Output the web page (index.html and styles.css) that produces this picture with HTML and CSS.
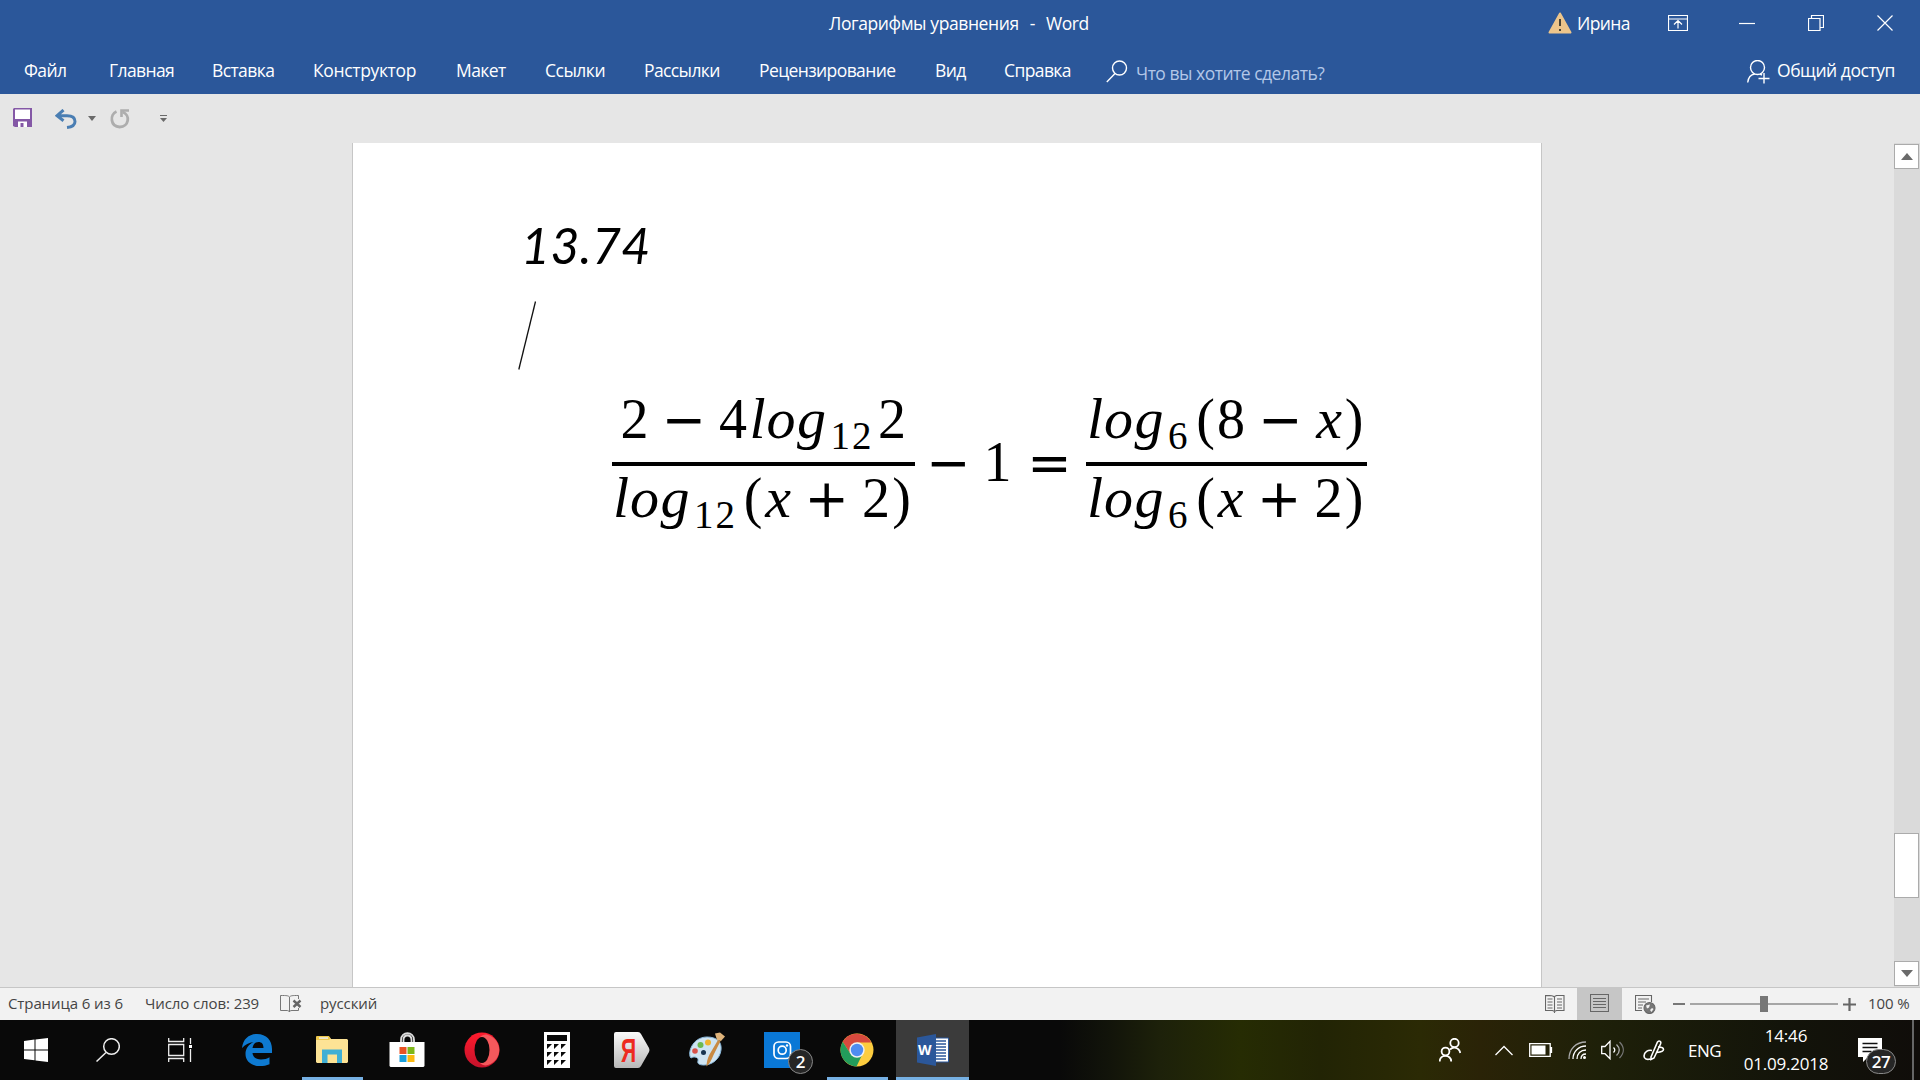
FILE: index.html
```html
<!DOCTYPE html>
<html lang="ru">
<head>
    <meta charset="UTF-8">
    <title>Логарифмы уравнения - Word</title>
    <link rel="stylesheet" href="styles.css">
</head>
<body>
    <header class="header">
        <div class="title-bar">
            <div class="title"><span>Логарифмы уравнения</span><span>-</span><span>Word</span></div>
            <div class="window-tools">
                <svg class="warn" width="24" height="22" viewBox="0 0 24 22"><path d="M12 1.5 22.5 20.5h-21z" fill="#edc58b" stroke="#edc58b" stroke-width="2" stroke-linejoin="round"/><path d="M12 7v7M12 17v2" stroke="#4a4436" stroke-width="2"/></svg>
                <span class="user">Ирина</span>
                <svg class="win-btn ribbon" width="20" height="16" viewBox="0 0 20 16"><path d="M.5.5h19v15H.5zM.5 4h19M10 13.500V6M6 9.500l4-4 4 4"/></svg>
                <svg class="win-btn" width="16" height="16" viewBox="0 0 16 16"><path d="M0 8.500h16"/></svg>
                <svg class="win-btn" width="16" height="16" viewBox="0 0 16 16"><path d="M.5 3.500h11.500v12H.5zM3.500 3.500V.5h12v12H12"/></svg>
                <svg class="win-btn" width="16" height="16" viewBox="0 0 16 16"><path d="M.5.5l15 15M15.500.5l-15 15"/></svg>
            </div>
        </div>
        <nav class="menu">
            <span class="file">Файл</span>
            <span class="home">Главная</span>
            <span class="insert">Вставка</span>
            <span class="design">Конструктор</span>
            <span class="layout">Макет</span>
            <span class="refs">Ссылки</span>
            <span class="mail">Рассылки</span>
            <span class="review">Рецензирование</span>
            <span class="view">Вид</span>
            <span class="help">Справка</span>
            <svg class="find" width="22" height="23" viewBox="0 0 22 23"><circle cx="13.500" cy="8" r="7"/><path d="M9 13.500.8 22"/></svg>
            <span class="ask">Что вы хотите сделать?</span>
            <div class="share">
                <svg width="23" height="24" viewBox="0 0 23 24"><circle cx="10.500" cy="7.500" r="7"/><path d="M.7 22.500c.6-5 3.300-8 7-8.500M13 14l2 1M17 13v10.500M11.500 18.500H22.500"/></svg>
                <span>Общий доступ</span>
            </div>
        </nav>
    </header>

    <div class="quick-bar">
        <svg class="save" width="20" height="20" viewBox="0 0 20 20"><path d="M1 0h18v19H2l-2-1V1z" fill="#8458a6"/><path d="M2 1.500h15v9.500H2z" fill="#fff"/><path d="M5 13.500h9V19H5z" fill="#fff"/><path d="M7.500 15h3v4h-3z" fill="#8458a6"/></svg>
        <svg class="undo" width="22" height="20" viewBox="0 0 22 20"><path d="M8.500 1 2 6.700l6.500 5M2.500 6.700H12c5.500 0 8 2.600 8 5.800 0 3.500-3 5.500-8 6" fill="none" stroke="#4a7eb3" stroke-width="3"/></svg>
        <svg class="drop" width="9" height="5" viewBox="0 0 9 5"><path d="M0 0h8L4 5z" fill="#6a6a6a"/></svg>
        <svg class="redo" width="20" height="20" viewBox="0 0 20 20"><path d="M6.500 2.500C-.5 5.500.2 17.800 9.700 18c9.300-.2 11-12 3-15" fill="none" stroke="#adadad" stroke-width="2.800"/><path d="M11.500 8V1.500H19" fill="none" stroke="#adadad" stroke-width="2.600"/></svg>
        <svg class="more" width="8" height="8" viewBox="0 0 8 8"><path d="M0 .5h7" stroke="#6a6a6a"/><path d="M0 3h7L3.500 7z" fill="#6a6a6a"/></svg>
    </div>

    <main class="workspace">
        <div class="page">
            <h1>13.74</h1>
            <svg class="stroke" width="20" height="70" viewBox="0 0 20 70"><path d="M17.500.5.800 68.500" fill="none" stroke="#111" stroke-width="1.300"/></svg>
            <div class="equation">
                <div class="fraction">
                    <div class="row"><b>2</b><s>−</s><b>4</b><i class="l">l</i><i class="o">o</i><i class="g">g</i><sub>12</sub><b>2</b></div>
                    <div class="row wide"><i class="l">l</i><i class="o">o</i><i class="g">g</i><sub>12</sub><u class="open">(</u><i class="x">x</i><s>+</s><b>2</b><u>)</u></div>
                </div>
                <div class="row middle"><s>−</s><b>1</b><s class="equals">=</s></div>
                <div class="fraction">
                    <div class="row wide"><i class="l">l</i><i class="o">o</i><i class="g">g</i><sub>6</sub><u class="open">(</u><b>8</b><s>−</s><i class="x">x</i><u>)</u></div>
                    <div class="row wide"><i class="l">l</i><i class="o">o</i><i class="g">g</i><sub>6</sub><u class="open">(</u><i class="x">x</i><s>+</s><b>2</b><u>)</u></div>
                </div>
            </div>
        </div>
        <div class="scrollbar">
            <div class="scroll-btn"><svg width="12" height="7" viewBox="0 0 12 7"><path d="M0 7h12L6 0z"/></svg></div>
            <div class="thumb"></div>
            <div class="scroll-btn"><svg width="12" height="7" viewBox="0 0 12 7"><path d="M0 0h12L6 7z"/></svg></div>
        </div>
    </main>

    <footer class="status">
        <span class="pages">Страница 6 из 6</span>
        <span class="words">Число слов: 239</span>
        <svg class="proof" width="22" height="18" viewBox="0 0 22 18"><path d="M9.500 17V2C8 .5 7 .5.500.5v15h6.500c1 0 2 .5 2.500 1.500 0-1 1-1.500 2.500-1.500h6.500V13M9.500 2C11 .5 12 .5 18.500.5V4" fill="none" stroke="#777"/><path d="M13.500 5.500l7 6.500M20.500 5.500l-7 6.500" stroke="#666" stroke-width="2.400"/></svg>
        <span class="words">русский</span>
        <div class="status-right">
            <svg class="read" width="20" height="18" viewBox="0 0 20 18"><path d="M9.500 18V2C8 .5 7 .5.500.5v15h7l2 1 2-1h7.500V.5h-7.500l-2 1M2.500 4h5M2.500 7h5M2.500 10h5M2.500 13h5M12 4h5M12 7h5M12 10h5M12 13h5"/></svg>
            <div class="print"><svg width="19" height="18" viewBox="0 0 19 18"><path d="M.5.5h18v17H.5zM3 4.500h13M3 7.500h13M3 10.500h13M3 13.500h13"/></svg></div>
            <svg class="web" width="21" height="19" viewBox="0 0 21 19"><path d="M7 15.500H.5V.5h16V7M3 4h11M3 7h8M3 10h5M3 13h4"/><circle cx="14.500" cy="13" r="5.500" fill="#777"/><path d="M11 10.500l4-1-1 3-2 1zM15 15l2-2 1.500 1-2 3z" fill="#f2f2f2" stroke="none"/></svg>
            <span class="minus"></span>
            <div class="zoom"><span></span></div>
            <svg class="plus" width="13" height="13" viewBox="0 0 13 13"><path d="M0 6.500h13M6.500 0v13"/></svg>
            <span class="percent">100 %</span>
        </div>
    </footer>

    <div class="taskbar">
        <div class="task"><svg width="24" height="24" viewBox="0 0 24 24"><path d="M0 3l10.500-1.400v9.900H0zM11.500 1.400 24 0v11.500H11.500zM0 12.500h10.500v9.800L0 21zM11.500 12.500H24V24l-12.500-1.600z" fill="#fff"/></svg></div>
        <div class="task"><svg width="24" height="24" viewBox="0 0 24 24" fill="none" stroke="#eee" stroke-width="1.500"><circle cx="15.500" cy="8.500" r="7.800"/><path d="M10 14.500.5 23.500"/></svg></div>
        <div class="task"><svg width="24" height="24" viewBox="0 0 24 24" fill="none" stroke="#eee" stroke-width="1.300"><path d="M.7 6.500h15v11H.7zM.7 0v3.500h15V0M.7 24v-3.500h15V24M22.500 0v6M22.500 11v13"/><path d="M21 7h3v3h-3z" fill="#fff" stroke="none"/></svg></div>
        <div class="task edge"><svg width="32" height="34" viewBox="0 0 32 34"><path d="M1 15C2 6 8 1 16 1c9.500 0 15 6.500 15 15v4H11.500c.4 4.500 4 6.500 8.500 6.500 3.500 0 6-1 8.500-2.300v7C25.500 32.500 22.500 33 19 33 9.500 33 4.500 27.500 4.500 21c0-5.500 3-9.500 8-12C8 9.500 4 11.500 1 15zm10.500 0h11c0-4-1.800-6-5-6s-5.200 2-6 6z" fill="#0e7ad1"/></svg></div>
        <div class="task open-app"><svg width="32" height="28" viewBox="0 0 32 28"><path d="M0 1.500h14l1 1.500h16l1 1v22l-1 1H1l-1-1z" fill="#fde395"/><path d="M0 1q0-1 1-1h12l1.500 2.500L13 4H0z" fill="#efc94c"/><path d="M3 1.300h9v1.500H3z" fill="#eee"/><path d="M6 13.500h20V27h-5v-8.500h-9.500V27H6z" fill="#40afd5"/></svg></div>
        <div class="task"><svg width="36" height="36" viewBox="0 0 36 36"><path d="M12 10V8c0-9 13-9 13 0v2M14.500 10V8c0-6 8-6 8 0v2" fill="none" stroke="#ddd" stroke-width="1.800"/><path d="M.5 10h35v24l-1 1h-33l-1-1z" fill="#fff"/><path d="M10.500 15h7v7h-7z" fill="#e95325"/><path d="M18.500 15h7v7h-7z" fill="#7eb71a"/><path d="M10.500 23h7v7h-7z" fill="#1a9fdb"/><path d="M18.500 23h7v7h-7z" fill="#fbb912"/></svg></div>
        <div class="task"><svg width="36" height="36" viewBox="0 0 36 36"><defs><linearGradient id="opera" x2="0" y2="1"><stop stop-color="#ff1b2d"/><stop offset="1" stop-color="#c4122b"/></linearGradient></defs><circle cx="18" cy="18" r="17.500" fill="url(#opera)"/><path d="M24 3c15 5 15 25 0 30-3 1-6 0-8-2 12 0 12-26 0-26 2-2 5-3 8-2z" fill="#f4585c"/><ellipse cx="18" cy="18" rx="7.500" ry="13" fill="#090909"/></svg></div>
        <div class="task"><svg width="26" height="36" viewBox="0 0 26 36"><path d="M0 0h26v36H0z" fill="#fff"/><path d="M3 3h20v6H3zM3 12h5L3 17zM10 12h5L10 17zM17 12h5L17 17zM3 20h5L3 25zM10 20h5L10 25zM17 20h5L17 25zM3 28h5L3 33zM10 28h5L10 33zM17 28h5L17 33z" fill="#0a0a0a"/></svg></div>
        <div class="task yandex"><svg width="36" height="36" viewBox="0 0 36 36"><defs><linearGradient id="tag" x2="0" y2="1"><stop stop-color="#fafafa"/><stop offset="1" stop-color="#b8b8b8"/></linearGradient></defs><path d="M2 0h22q2 0 3 2l8 14q1 2 0 4l-8 14q-1 2-3 2H2q-2 0-2-2V2Q0 0 2 0z" fill="url(#tag)"/></svg><span>Я</span></div>
        <div class="task"><svg width="36" height="36" viewBox="0 0 36 36"><path d="M18 5c10 0 15 5 14 13-1 9-9 15-17 15-4 0-7-1-6-4 1-4-4-5-7-3C-2 22 3 5 18 5z" fill="#cfe4f2" stroke="#89b8db"/><circle cx="6" cy="19" r="2.800" fill="#d8524a"/><circle cx="11.500" cy="13" r="3" fill="#6dba50"/><circle cx="19" cy="10.500" r="3" fill="#f0b32e"/><circle cx="14.500" cy="20.500" r="2.500" fill="#173451"/><path d="M17.500 34.500c0-4 1-8 3-12L29 8l2.500 1-7 14c-2 5-4 9-7 11.500z" fill="#c88a43"/><path d="M26 1.500l5-1 5 4-4 4.500-4-1z" fill="#dfb37a"/></svg></div>
        <div class="task insta"><svg width="36" height="36" viewBox="0 0 36 36"><path d="M0 0h36v36H0z" fill="#0a78d6"/><g fill="none" stroke="#fff" stroke-width="1.700"><rect x="10" y="10" width="16.500" height="16.500" rx="4.500"/><circle cx="18.200" cy="18.200" r="4"/></g><circle cx="23" cy="13.500" r="1.200" fill="#fff"/></svg><span class="badge">2</span></div>
        <div class="task open-app chrome"><svg width="34" height="34" viewBox="0 0 34 34"><circle cx="17" cy="17" r="16.500" fill="#fdcd3f"/><path d="M17 17 2.700 8.700A16.500 16.500 0 0 1 31.300 9.500H17z" fill="#d74a3e"/><path d="M2.700 8.700 10 20l7-11z" fill="#d74a3e"/><path d="M2.700 8.700A16.500 16.500 0 0 0 16.500 33.500L22 22 10 20z" fill="#239c5b"/><circle cx="17" cy="17" r="7.700" fill="#f0f0f0"/><circle cx="17" cy="17" r="6.200" fill="#4e8cf0"/></svg></div>
        <div class="task word"><svg width="32" height="32" viewBox="0 0 32 32"><path d="M17 4h14.500v24H17z" fill="#fff" stroke="#2b579a"/><path d="M19 7h10M19 10h10M19 13h10M19 16h10M19 19h10M19 22h10M19 25h10" stroke="#2b579a" stroke-width="1.400"/><path d="M0 3.500 19 0v32L0 28.500z" fill="#2b579a"/></svg><span>W</span></div>

        <div class="tray">
            <svg class="people" width="22" height="24" viewBox="0 0 22 24" stroke-width="1.800"><circle cx="15.500" cy="5" r="4.200"/><circle cx="6.500" cy="13.500" r="3.900"/><path d="M.7 23.500c0-7.500 11.500-7.500 11.500 0M11 11.500c3-3 9-2.500 10.300 3.500"/></svg>
            <svg class="chevron" width="18" height="11" viewBox="0 0 18 11"><path d="M.5 10 9 1.500l8.500 8.500"/></svg>
            <svg class="battery" width="24" height="14" viewBox="0 0 24 14"><path d="M.7.7h20.500v12.600H.7zM22.500 4v6"/><path d="M2.500 2.500h14v9h-14z" fill="#fff" stroke="none"/></svg>
            <svg class="wifi" width="19" height="19" viewBox="0 0 19 19"><path d="M1 18C1 8 8 1 18 1" stroke="#aaa"/><path d="M5 18C5 10.500 10.500 5 18 5M9 18c0-5.500 3.500-9 9-9M13 18c0-3 2-5 5-5"/><circle cx="16.500" cy="16.500" r="1.500" fill="#fff" stroke="none"/></svg>
            <svg class="volume" width="23" height="20" viewBox="0 0 23 20"><path d="M.7 6.500H4L9 1.300v17.400l-5-5H.7zM12.500 7.500c1.500 1.500 1.500 3.500 0 5"/><path d="M15.500 4.500c3.500 3.500 3.500 7.500 0 11" stroke="#aaa"/><path d="M18.500 2c5 5 5 11 0 16" stroke="#777"/></svg>
            <svg class="pen" width="22" height="21" viewBox="0 0 22 21" stroke-width="1.600"><path d="M8 17 14.500 2c2-2 4-.5 3 2L11 18l-3 1.500zM9 10.500c-4-1-7.800 1.500-8 5.500 0 3 3.200 4 6.200 3M15 7c4 0 5.500 1 5.500 2.500S18 12 14 12.500"/></svg>
            <span class="lang">ENG</span>
            <div class="clock"><span class="time">14:46</span><span class="date">01.09.2018</span></div>
            <div class="notes"><svg width="24" height="24" viewBox="0 0 24 24"><path d="M0 0h24v19H10l-5 5v-5H0z" fill="#fff"/><path d="M4.500 5.500h15M4.500 9.500h15M4.500 13.500h9" stroke="#111" stroke-width="1.300"/></svg><span class="badge">27</span></div>
        </div>
    </div>
</body>
</html>
```
FILE: styles.css
```css
* {
    margin: 0;
    padding: 0;
    box-sizing: border-box;
}

body {
    width: 1920px;
    height: 1080px;
    overflow: hidden;
    display: flex;
    flex-direction: column;
    background: #e6e6e6;
    font-family: "Open Sans", "Noto Sans", sans-serif;
}

svg {
    display: block;
    flex: none;
}

span {
    white-space: nowrap;
}

/* Header */
.header {
    height: 94px;
    background: #2b579a;
    color: #fff;
    font-size: 17.5px;
    letter-spacing: -0.6px;
}

.title-bar {
    height: 47px;
    display: flex;
    line-height: 47px;
}

.title {
    display: flex;
    gap: 11px;
    padding-left: 829px;
    width: 1548px;
    flex: none;
    letter-spacing: -0.4px;
}

.window-tools {
    display: flex;
    align-items: center;
    flex: none;
}

.warn {
    margin-top: -1px;
}

.user {
    width: 91px;
    margin-left: 5px;
}

.win-btn {
    fill: none;
    stroke: #fff;
    stroke-width: 1.200;
    margin: -1px 53px 0 0;
}

.ribbon {
    margin-right: 51px;
}

.menu {
    height: 47px;
    display: flex;
    line-height: 47px;
    padding-left: 24px;
}

.menu > * {
    flex: none;
}

.file { width: 85px; }
.home { width: 103px; }
.insert { width: 101px; }
.design { width: 143px; letter-spacing: -0.35px; }
.layout { width: 89px; }
.refs { width: 89px; letter-spacing: -0.5px; }
.refs { width: 99px; }
.mail { width: 115px; }
.review { width: 176px; }
.view { width: 69px; }
.help { width: 102px; }

.find,
.share svg {
    fill: none;
    stroke: #fff;
    stroke-width: 1.400;
}

.find {
    margin-top: 13px;
}

.ask {
    color: #b3c7e8;
    width: 619px;
    padding: 3px 0 0 8px;
    letter-spacing: -0.5px;
}

.share {
    display: flex;
    gap: 7px;
    letter-spacing: -0.45px;
}

.share svg {
    margin-top: 13px;
}

/* Quick access */
.quick-bar {
    height: 49px;
    display: flex;
    padding: 14px 0 0 13px;
}

.undo { margin: 1px 11px 0 22px; }
.drop { margin-top: 8px; }
.redo { margin: 1px 30px 0 13px; }
.more { margin-top: 7px; }

/* Document */
.workspace {
    height: 844px;
    display: flex;
    justify-content: space-between;
    padding-left: 352px;
}

.page {
    width: 1190px;
    position: relative;
    padding: 72px 0 0 168px;
    background: #fff;
    border: 1px solid #c6c6c6;
    border-width: 0 1px;
    color: #000;
}

.page h1 {
    font: italic 400 50px/60px Lato, sans-serif;
    letter-spacing: 0.4px;
    height: 163px;
}

.stroke {
    position: absolute;
    left: 165px;
    top: 158px;
}

.equation {
    display: flex;
    margin-left: 91px;
    height: 170px;
    font-family: "Liberation Serif", serif;
    font-size: 56px;
}

.row {
    display: flex;
    justify-content: center;
    align-items: baseline;
    line-height: 82px;
}

.fraction .row:first-child {
    height: 88px;
    border-bottom: 4px solid #000;
}

.fraction .row:last-child {
    height: 79px;
    line-height: 64px;
}

.row > * {
    text-align: center;
    text-decoration: none;
    flex: none;
}

.row b {
    width: 31px;
    font-weight: 400;
}

.row i { font-size: 58px; }
.row .l { width: 18px; }
.row .o { width: 28px; }
.row .g { width: 34px; }
.row .x { width: 30px; }

.row s {
    width: 67.5px;
    font-family: "DejaVu Sans", sans-serif;
    font-size: 53px;
}

.row .equals {
    width: 73px;
}

.row u {
    width: 20px;
}

.row .open {
    width: 23px;
    padding-left: 3px;
}

.row sub {
    font-size: 39px;
    letter-spacing: 2px;
    margin: 0 3px 0 2px;
    position: relative;
    top: 11px;
    vertical-align: baseline;
}

.wide {
    padding-right: 3px;
}

.middle {
    height: 168px;
    line-height: 168px;
}

.scrollbar {
    width: 26px;
    padding: 1px 1px 1px 0;
    background: #dadada;
    display: flex;
    flex-direction: column;
}

.scroll-btn,
.thumb {
    height: 25px;
    background: #fff;
    border: 1px solid #ababab;
    display: flex;
    align-items: center;
    justify-content: center;
    fill: #6a6a6a;
}

.thumb {
    height: 65px;
    margin: 664px 0 63px;
}

/* Status bar */
.status {
    height: 33px;
    border-top: 1px solid #c6c6c6;
    background: #f2f2f2;
    color: #444;
    font-size: 15px;
    letter-spacing: -0.1px;
    display: flex;
    align-items: center;
    padding-left: 8px;
}

.pages,
.words {
    margin-top: -2px;
}

.pages { width: 137px; }
.words { width: 135px; }
.proof { margin-right: 18px; }

.status-right {
    margin-left: auto;
    display: flex;
    align-items: center;
    height: 32px;
}

.read, .print svg, .web, .plus {
    fill: none;
    stroke: #666;
    stroke-width: 1.100;
}

.print {
    margin: 0 13px 0 12px;
    width: 45px;
    height: 32px;
    padding: 6px 13px;
    background: #c6c6c6;
}

.minus {
    width: 12px;
    height: 2px;
    background: #777;
    margin: 0 5px 0 17px;
}

.zoom {
    width: 148px;
    height: 16px;
    padding-left: 70px;
    background: linear-gradient(#a6a6a6, #a6a6a6) 0 7px / 100% 2px no-repeat;
}

.zoom span {
    display: block;
    width: 8px;
    height: 16px;
    background: #777;
}

.plus {
    margin: 0 12px 0 5px;
    stroke-width: 2.200;
}

.percent {
    width: 52px;
    margin-top: -2px;
}

/* Taskbar */
.taskbar {
    height: 60px;
    display: flex;
    background: linear-gradient(90deg, #090909 0, #090909 1060px, #12140a 1110px, #1d210a 1160px, #262c03 1240px, #222405 1320px, #2b2a05 1420px, #2a2307 1480px, #1e2009 1600px, #13140a 1780px, #100d0a 1920px);
    color: #fff;
}

.task {
    width: 72px;
    flex: none;
    margin-right: 3px;
    display: flex;
    align-items: center;
    justify-content: center;
    position: relative;
}

.task:nth-child(-n+3) { margin-right: 0; }
.task:nth-child(3) { margin-right: 5px; }

.open-app::after,
.word::after {
    content: "";
    position: absolute;
    left: 6px;
    right: 5px;
    bottom: 0;
    height: 3px;
    background: #76b0e3;
}

.word {
    width: 73px;
    background: #3b3b3b;
}

.word::after {
    left: 0;
    right: 0;
}

.word span,
.yandex span {
    position: absolute;
    font: bold 14px/60px "Open Sans", sans-serif;
    left: 22px;
    top: 0;
}

.yandex span {
    left: 25px;
    color: #ed2a20;
    font: bold 34px/60px "Liberation Sans", sans-serif;
    transform: scaleX(0.62);
    transform-origin: left;
}

.badge {
    position: absolute;
    left: 42px;
    top: 29px;
    width: 25px;
    height: 25px;
    border: 1px solid #888;
    border-radius: 13px;
    background: #262626;
    font-size: 17px;
    font-weight: 600;
    line-height: 23px;
    text-align: center;
}

.tray {
    margin-left: auto;
    width: 481px;
    flex: none;
    display: flex;
    align-items: center;
    fill: none;
    stroke: #fff;
    stroke-width: 1.300;
    font-size: 17px;
    letter-spacing: -0.5px;
}

.people { margin-right: 34px; }
.chevron { margin-right: 16px; }
.battery { margin-right: 15px; }
.wifi { margin-right: 14px; }
.volume { margin-right: 19px; }
.pen { margin-right: 23px; }

.lang {
    width: 53px;
}

.clock {
    width: 90px;
    text-align: center;
    display: flex;
    flex-direction: column;
    line-height: 28px;
    letter-spacing: -0.2px;
}

.notes {
    position: relative;
    margin-left: 27px;
    padding-right: 30px;
    border-right: 2px solid #666;
    height: 60px;
    padding-top: 18px;
}

.notes svg {
    stroke: none;
}

.notes .badge {
    left: 8px;
    width: 30px;
}
```
